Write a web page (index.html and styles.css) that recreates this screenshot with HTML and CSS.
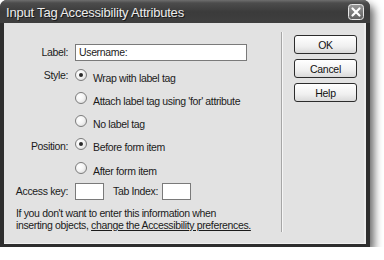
FILE: index.html
```html
<!DOCTYPE html>
<html lang="en">
<head>
  <meta charset="UTF-8" />
  <meta name="viewport" content="width=device-width, initial-scale=1.0" />
  <title>Input Tag Accessibility Attributes</title>
  <link rel="stylesheet" href="styles.css">
</head>
<body>
  <div class="window">
    <div class="titlebar">
      <span class="title">Input Tag Accessibility Attributes</span>
      <span class="close">
        <svg width="16" height="16" viewBox="0 0 16 16">
          <defs>
            <linearGradient id="cg" x1="0" y1="0" x2="0" y2="1">
              <stop offset="0" stop-color="#9a9a9a" />
              <stop offset="1" stop-color="#5e5e5e" />
            </linearGradient>
          </defs>
          <rect x="0.5" y="0.5" width="15" height="15" rx="3" fill="url(#cg)" stroke="#e6e6e6" />
          <path d="M4.5 4.5 L11.5 11.5 M11.5 4.5 L4.5 11.5" stroke="#fff" stroke-width="2.2" stroke-linecap="round" />
        </svg>
      </span>
    </div>
    <div class="client">
      <div class="form">
        <div class="grid">
          <span class="lbl">Label:</span>
          <div class="val"><span class="field wide">Username:</span></div>

          <span class="lbl">Style:</span>
          <div class="radio checked"><span class="dot"></span><span class="txt">Wrap with label tag</span></div>
          <span></span>
          <div class="radio"><span class="dot"></span><span class="txt">Attach label tag using 'for' attribute</span></div>
          <span></span>
          <div class="radio"><span class="dot"></span><span class="txt">No label tag</span></div>

          <span class="lbl low">Position:</span>
          <div class="radio checked"><span class="dot"></span><span class="txt">Before form item</span></div>
          <span></span>
          <div class="radio"><span class="dot"></span><span class="txt">After form item</span></div>

          <span class="lbl">Access key:</span>
          <div class="val">
            <span class="field key"></span>
            <span class="tab-label">Tab Index:</span>
            <span class="field tab"></span>
          </div>
        </div>
        <p class="note">If you don't want to enter this information when<br>inserting objects, <a href="#">change the Accessibility preferences.</a></p>
      </div>
      <div class="sep"></div>
      <div class="buttons">
        <button>OK</button>
        <button>Cancel</button>
        <button>Help</button>
      </div>
    </div>
  </div>
</body>
</html>
```

FILE: styles.css
```css
body {
  margin: 0;
  padding: 0;
  background: #fff;
  font-family: 'Liberation Sans', Arial, sans-serif;
  font-size: 10.5px;
  letter-spacing: -0.35px;
  color: #1b1b1b;
}
.window {
  width: 370px;
  height: 247px;
  box-sizing: border-box;
  display: flex;
  flex-direction: column;
  background: #2e2e2e;
  border-radius: 7px 7px 0 0;
  box-shadow: 4px 5px 9px rgba(0, 0, 0, 0.6);
}
.titlebar {
  height: 23px;
  flex: none;
  display: flex;
  align-items: center;
  justify-content: space-between;
  padding: 0 6px;
  border-radius: 7px 7px 0 0;
  background: linear-gradient(#6e6e6e 0, #4c4c4c 3px, #3b3b3b 12px, #3f3f3f 23px);
}
.title {
  font-size: 13px;
  letter-spacing: -0.2px;
  color: #ececec;
  text-shadow: 1px 1px 0 #1a1a1a;
  padding-top: 2px;
}
.close {
  display: flex;
  width: 16px;
  height: 16px;
}
.client {
  flex: 1;
  display: flex;
  margin: 0 4px 3px 4px;
  background: #e2e2e2;
  border-right: 2px solid #ededed;
  border-bottom: 1px solid #f0f0f0;
}
.form {
  width: 277px;
  padding-top: 18px;
}
.grid {
  display: grid;
  grid-template-columns: 64px auto;
  grid-template-rows: 22px 23px 23px 23px 24px 24px 22px;
  column-gap: 7px;
}
.lbl {
  text-align: right;
  align-self: center;
}
.lbl.low {
  padding-top: 4px;
}
.val {
  display: flex;
  align-items: center;
}
.field {
  display: block;
  box-sizing: border-box;
  height: 17px;
  line-height: 15px;
  padding-left: 3px;
  background: #fff;
  border: 1px solid #7a7a7a;
}
.field.wide {
  width: 172px;
}
.field.key {
  width: 29px;
}
.field.tab {
  width: 29px;
}
.tab-label {
  margin: 0 4px 0 9px;
}
.radio {
  display: flex;
  align-items: center;
  gap: 6px;
}
.dot {
  width: 12px;
  height: 12px;
  box-sizing: border-box;
  border-radius: 50%;
  border: 1px solid #7c7c7c;
  background: radial-gradient(circle at 35% 35%, #fff 0, #f4f4f4 45%, #d2d2d2 100%);
  display: flex;
  align-items: center;
  justify-content: center;
}
.radio.checked .dot::after {
  content: "";
  width: 4px;
  height: 4px;
  border-radius: 50%;
  background: #2a2a2a;
}
.txt {
  padding-top: 6px;
}
.note {
  margin: 5px 0 0 0;
  padding-left: 12px;
  line-height: 12px;
}
.note a {
  color: inherit;
  text-decoration: underline;
}
.sep {
  width: 1px;
  margin: 9px 0 11px 0;
  background: #a6a6a6;
  border-right: 1px solid #f6f6f6;
}
.buttons {
  flex: 1;
  display: flex;
  flex-direction: column;
  gap: 5px;
  padding: 12px 0 0 11px;
}
button {
  width: 63px;
  height: 19px;
  padding: 0;
  font-family: inherit;
  font-size: 10.5px;
  letter-spacing: -0.3px;
  color: #111;
  border: 1px solid #2c2c2c;
  border-radius: 3px;
  background: linear-gradient(#ffffff, #f0f0f0 60%, #dadada);
}
```
